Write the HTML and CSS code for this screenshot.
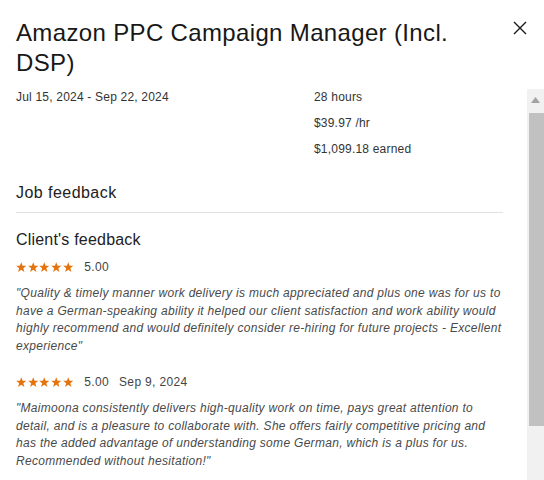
FILE: index.html
```html
<!DOCTYPE html>
<html>
<head>
<meta charset="utf-8">
<link rel="stylesheet" href="styles.css">
</head>
<body>
<div class="modal">
  <div class="header">
    <h1 class="title">Amazon PPC Campaign Manager (Incl. DSP)</h1>
    <button class="close" aria-label="Close">
      <svg width="14" height="14" viewBox="0 0 14 14"><path d="M1 1 L13 13 M13 1 L1 13" stroke="#1a1a1a" stroke-width="1.4" fill="none"/></svg>
    </button>
  </div>
  <div class="body">
    <div class="content">
      <div class="stats">
        <div class="dates">Jul 15, 2024 - Sep 22, 2024</div>
        <div class="figures">
          <div>28 hours</div>
          <div>$39.97 /hr</div>
          <div>$1,099.18 earned</div>
        </div>
      </div>
      <h2 class="section">Job feedback</h2>
      <h3 class="sub">Client's feedback</h3>
      <div class="rating">
        <span class="stars">
          <svg viewBox="0 0 10 10"><polygon points="5,0.2 6.3,3.5 9.8,3.6 7,5.9 8,9.5 5,7.4 2,9.5 3,5.9 0.2,3.6 3.7,3.5"/></svg>
          <svg viewBox="0 0 10 10"><polygon points="5,0.2 6.3,3.5 9.8,3.6 7,5.9 8,9.5 5,7.4 2,9.5 3,5.9 0.2,3.6 3.7,3.5"/></svg>
          <svg viewBox="0 0 10 10"><polygon points="5,0.2 6.3,3.5 9.8,3.6 7,5.9 8,9.5 5,7.4 2,9.5 3,5.9 0.2,3.6 3.7,3.5"/></svg>
          <svg viewBox="0 0 10 10"><polygon points="5,0.2 6.3,3.5 9.8,3.6 7,5.9 8,9.5 5,7.4 2,9.5 3,5.9 0.2,3.6 3.7,3.5"/></svg>
          <svg viewBox="0 0 10 10"><polygon points="5,0.2 6.3,3.5 9.8,3.6 7,5.9 8,9.5 5,7.4 2,9.5 3,5.9 0.2,3.6 3.7,3.5"/></svg>
        </span>
        <span class="score">5.00</span>
      </div>
      <p class="quote">"Quality &amp; timely manner work delivery is much appreciated and plus one was for us to have a German-speaking ability it helped our client satisfaction and work ability would highly recommend and would definitely consider re-hiring for future projects - Excellent experience"</p>
      <div class="rating second">
        <span class="stars">
          <svg viewBox="0 0 10 10"><polygon points="5,0.2 6.3,3.5 9.8,3.6 7,5.9 8,9.5 5,7.4 2,9.5 3,5.9 0.2,3.6 3.7,3.5"/></svg>
          <svg viewBox="0 0 10 10"><polygon points="5,0.2 6.3,3.5 9.8,3.6 7,5.9 8,9.5 5,7.4 2,9.5 3,5.9 0.2,3.6 3.7,3.5"/></svg>
          <svg viewBox="0 0 10 10"><polygon points="5,0.2 6.3,3.5 9.8,3.6 7,5.9 8,9.5 5,7.4 2,9.5 3,5.9 0.2,3.6 3.7,3.5"/></svg>
          <svg viewBox="0 0 10 10"><polygon points="5,0.2 6.3,3.5 9.8,3.6 7,5.9 8,9.5 5,7.4 2,9.5 3,5.9 0.2,3.6 3.7,3.5"/></svg>
          <svg viewBox="0 0 10 10"><polygon points="5,0.2 6.3,3.5 9.8,3.6 7,5.9 8,9.5 5,7.4 2,9.5 3,5.9 0.2,3.6 3.7,3.5"/></svg>
        </span>
        <span class="score">5.00</span>
        <span class="date">Sep 9, 2024</span>
      </div>
      <p class="quote">"Maimoona consistently delivers high-quality work on time, pays great attention to detail, and is a pleasure to collaborate with. She offers fairly competitive pricing and has the added advantage of understanding some German, which is a plus for us. Recommended without hesitation!"</p>
    </div>
    <div class="scrollbar">
      <div class="arrow"><svg width="9" height="6" viewBox="0 0 9 6"><polygon points="4.5,0 9,6 0,6" fill="#a3a3a3"/></svg></div>
      <div class="thumb"></div>
    </div>
  </div>
</div>
</body>
</html>
```
FILE: styles.css
```css
* { box-sizing: border-box; }
html, body { margin: 0; padding: 0; background: #fff; }
body {
  font-family: "Liberation Sans", Arial, sans-serif;
  color: #222;
}
.modal {
  width: 544px;
  height: 480px;
  overflow: hidden;
  display: flex;
  flex-direction: column;
}
.header {
  height: 89px;
  display: flex;
  justify-content: space-between;
  align-items: flex-start;
  padding: 18px 17px 0 16px;
  flex: none;
}
.title {
  margin: 0;
  width: 480px;
  font-size: 24px;
  line-height: 30px;
  font-weight: 400;
  color: #181818;
  letter-spacing: 0.35px;
}
.close {
  border: 0;
  background: none;
  padding: 0;
  margin-top: 3px;
  width: 14px;
  height: 14px;
  display: flex;
  cursor: pointer;
}
.body {
  flex: 1;
  display: flex;
  min-height: 0;
}
.content {
  flex: 1;
  padding: 0 24px 0 16px;
  overflow: hidden;
}
.stats {
  display: flex;
  font-size: 12px;
  line-height: 16px;
  color: #333;
  letter-spacing: 0.2px;
}
.dates { width: 298px; }
.figures {
  display: flex;
  flex-direction: column;
  gap: 10px;
}
.section {
  margin: 26px 0 0;
  padding-bottom: 9px;
  border-bottom: 1px solid #e2e2e2;
  font-size: 16px;
  line-height: 20px;
  font-weight: 400;
  letter-spacing: 0.45px;
  color: #222;
}
.sub {
  margin: 17px 0 0;
  font-size: 16px;
  line-height: 20px;
  font-weight: 400;
  letter-spacing: 0.2px;
  color: #222;
}
.rating {
  margin-top: 9px;
  display: flex;
  align-items: center;
  height: 16px;
  font-size: 12px;
  color: #444;
  letter-spacing: 0.35px;
}
.rating.second { margin-top: 18px; }
.stars {
  display: flex;
  gap: 1.2px;
  margin-right: 11px;
}
.stars svg {
  width: 10.5px;
  height: 10.5px;
  fill: #e5740f;
}
.date { margin-left: 10px; }
.quote {
  margin: 10px 0 0;
  font-size: 12px;
  line-height: 17.7px;
  font-style: italic;
  color: #4a4a4a;
  letter-spacing: 0.3px;
}
.scrollbar {
  width: 17px;
  flex: none;
  background: #f1f1f1;
  display: flex;
  flex-direction: column;
  align-items: stretch;
}
.arrow {
  height: 24px;
  display: flex;
  justify-content: center;
  align-items: center;
  padding-bottom: 2px;
}
.thumb {
  height: 313px;
  margin: 0 0 0 2px;
  background: #c1c1c1;
}
```
